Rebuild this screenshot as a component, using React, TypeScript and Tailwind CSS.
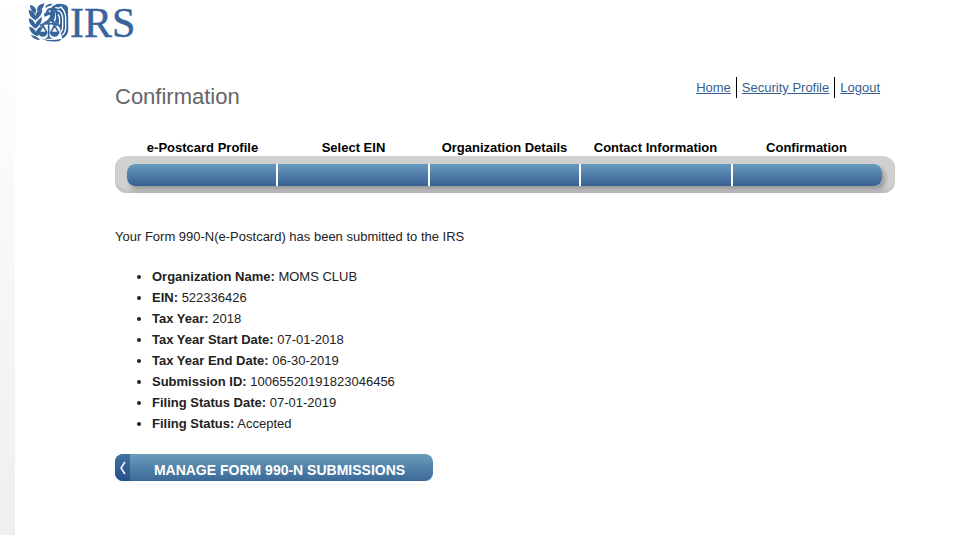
const steps = [
  'e-Postcard Profile',
  'Select EIN',
  'Organization Details',
  'Contact Information',
  'Confirmation',
];

const details: [string, string][] = [
  ['Organization Name:', 'MOMS CLUB'],
  ['EIN:', '522336426'],
  ['Tax Year:', '2018'],
  ['Tax Year Start Date:', '07-01-2018'],
  ['Tax Year End Date:', '06-30-2019'],
  ['Submission ID:', '10065520191823046456'],
  ['Filing Status Date:', '07-01-2019'],
  ['Filing Status:', 'Accepted'],
];

function Emblem() {
  return (
    <svg viewBox="0 0 126 126" className="size-[42px] shrink-0" fill="#38659c" aria-hidden="true">
      {/* laurel branch: paired leaves meeting on the stem */}
      <path d="M2 27 Q16 28 22 44 Q26 28 43 23 Q44 42 22 58 Q2 48 2 27Z" />
      <path d="M2 52 Q16 54 22 70 Q27 56 42 48 Q43 68 23 83 Q3 73 2 52Z" />
      <path d="M3 77 Q17 79 24 92 Q28 82 39 74 Q39 92 29 106 Q6 98 3 77Z" />
      <path d="M8 101 Q22 103 31 111 L36 117 Q18 117 8 101Z" />
      <path d="M6 12 Q19 13 25 27 L22 39 Q6 29 6 12Z" />
      <path d="M27 31 Q25 10 49 7 Q48 26 27 31Z" />
      {/* wing with light gaps between the feathers */}
      <path d="M68 22 Q82 5 101 9 Q118 11 120 20 L121 85 Q121 104 103 113 L95 80 Q86 72 81 61 Q88 45 80 30Z" />
      <g fill="none" stroke="white" strokeWidth="4">
        <path d="M82 19 Q93 24 99 18 Q112 31 113 49 V79 Q113 94 103 103" />
        <path d="M88 28 Q103 31 104 52 V76 Q104 86 99 94" />
        <path d="M90 40 Q97 49 94 70" />
      </g>
      {/* eagle head and breast */}
      <path d="M48 39 L54 34 Q56 21 67 21 Q78 21 81 33 Q84 47 77 57 L88 71 L76 67 L67 61 L55 68 L46 65 Q64 57 67 43 Q61 40 57 45 L49 47Z" />
      <circle cx="65" cy="31" r="3" fill="white" />
      <path d="M51 17 Q58 7 74 8 L67 15 Q59 14 54 20Z" />
      <path d="M36 112 Q64 121 101 113 L96 119 Q67 127 36 112Z" />
      {/* balance scales */}
      <g fill="none" stroke="#38659c" strokeWidth="5">
        <path d="M62 61 V109 M36 74 Q44 67 62 68 Q80 67 88 74" />
        <path d="M45 73 L34 94 M45 73 L56 94 M79 73 L69 94 M79 73 L92 94" />
      </g>
      <path d="M29 92 H59 Q57 107 45 107 Q32 107 29 92Z M65 92 H95 Q92 107 80 107 Q67 107 65 92Z M51 113 L62 105 L74 113Z" />
    </svg>
  );
}

export default function App() {
  return (
    <div className="flex min-h-screen bg-white font-['Liberation_Sans',Arial,sans-serif] text-[13px] leading-[21px] text-[#222]">
      <div className="w-[15px] shrink-0 bg-linear-to-b from-white to-[#efefef]" />
      <div className="min-w-0 grow">
        <div className="flex h-11 items-center pl-[13px]">
          <Emblem />
          <span className="pt-0.5 font-['Liberation_Serif','Times_New_Roman',serif] text-[42px] leading-[44px] text-[#38659c] [-webkit-text-stroke:0.5px_#38659c]">
            IRS
          </span>
        </div>

        <main className="mr-[83px] ml-[100px] pt-[33px]">
          <div className="flex items-start justify-between pr-[15px]">
            <h1 className="pt-1 text-[22px] leading-[32px] text-[#666]">Confirmation</h1>
            <nav className="flex leading-[21px] text-[#365f91]">
              <a href="#home" className="border-r border-black pr-[5px] underline">Home</a>
              <a href="#security" className="border-r border-black px-[5px] underline">Security Profile</a>
              <a href="#logout" className="pl-[5px] underline">Logout</a>
            </nav>
          </div>

          <ol className="mt-6 grid grid-cols-5 pr-[13px] pl-3 text-center font-bold text-black">
            {steps.map((step) => (
              <li key={step} className="whitespace-nowrap">{step}</li>
            ))}
          </ol>
          <div className="-mt-0.5 rounded-xl bg-[#d1d1d2] pt-2 pr-[13px] pb-[7px] pl-3 shadow-[inset_0_-3px_3px_#c0c0c0]">
            <div className="grid grid-cols-5 gap-0.5 overflow-hidden rounded-lg bg-white shadow-[3px_4px_5px_#999]">
              {steps.map((step) => (
                <div key={step} className="h-[22px] bg-linear-to-b from-[#6a9cbf] to-[#365f91]" />
              ))}
            </div>
          </div>

          <p className="mt-[33px]">Your Form 990-N(e-Postcard) has been submitted to the IRS</p>

          <ul className="mt-[19px] list-disc pl-[37px]">
            {details.map(([label, value]) => (
              <li key={label}>
                <b>{label}</b> {value}
              </li>
            ))}
          </ul>

          <button
            type="button"
            className="mt-5 flex h-[27px] w-[318px] overflow-hidden rounded-lg bg-linear-to-b from-[#6a9cbb] to-[#3c6997] text-white"
          >
            <span className="flex h-full w-[15px] items-center justify-center bg-linear-to-b from-[#40719f] to-[#24508a]">
              <svg viewBox="0 0 6 14" className="h-3.5 w-1.5" fill="none" stroke="white" strokeWidth="1.5" aria-hidden="true">
                <path d="M5 1 L1 7 L5 13" />
              </svg>
            </span>
            <span className="grow pt-1.5 pr-1 text-center text-sm leading-[21px] font-bold whitespace-nowrap">
              MANAGE FORM 990-N SUBMISSIONS
            </span>
          </button>
        </main>
      </div>
    </div>
  );
}
